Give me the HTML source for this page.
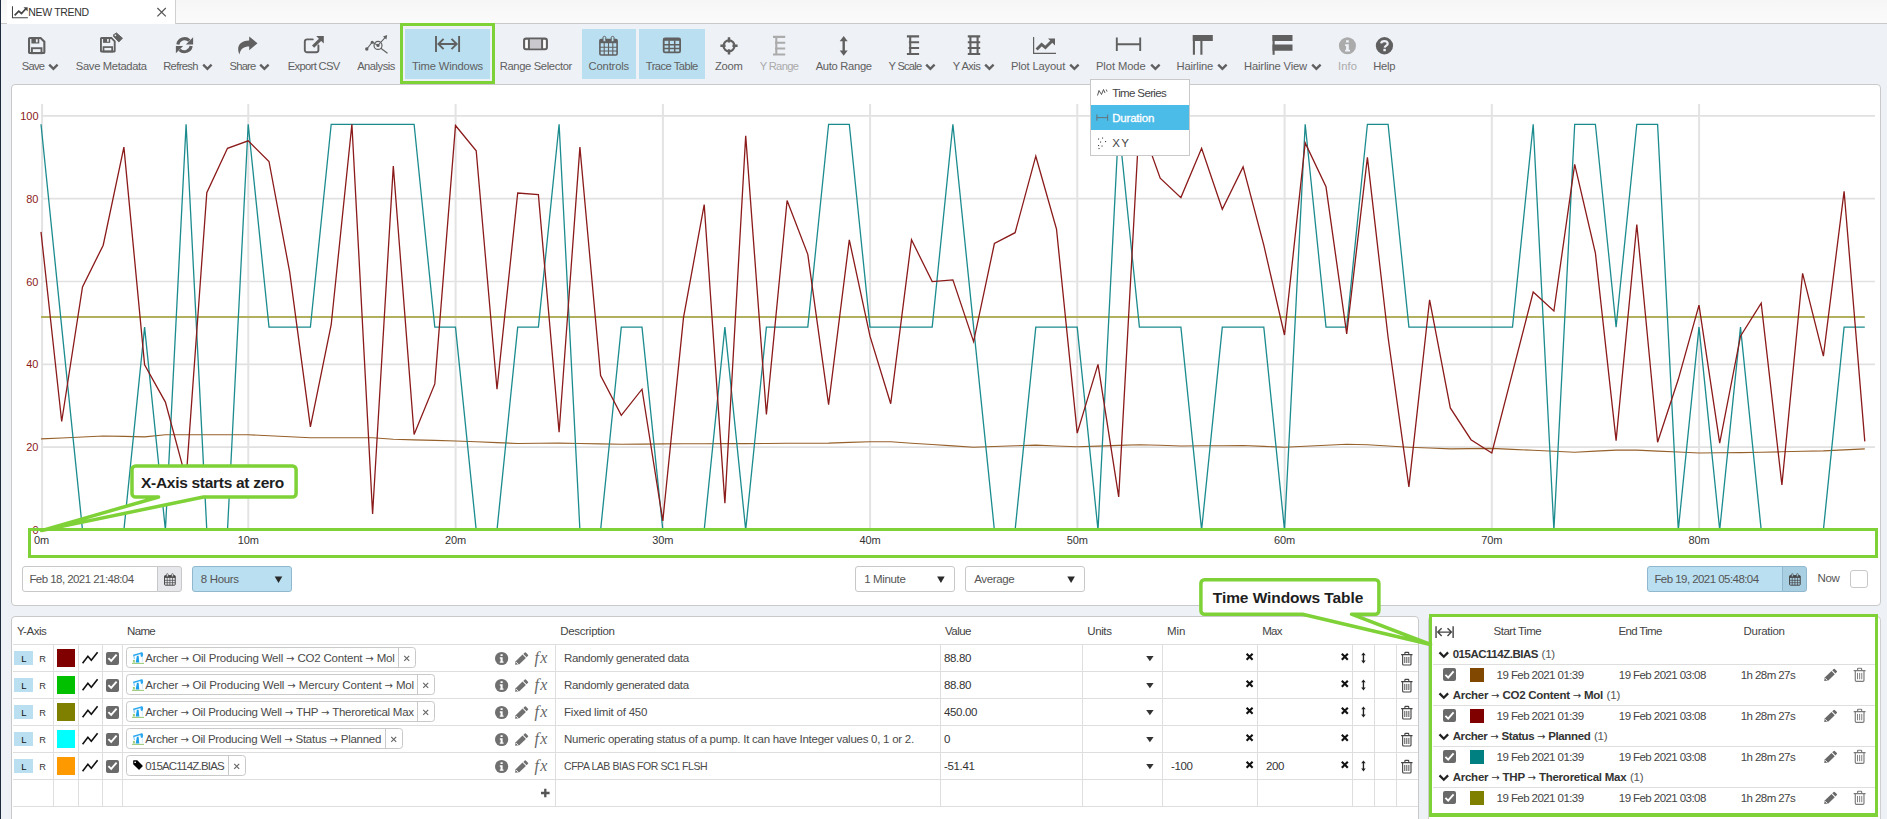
<!DOCTYPE html><html><head><meta charset="utf-8"><title>New Trend</title><style>
html,body{margin:0;padding:0;}
body{width:1887px;height:819px;overflow:hidden;position:relative;background:#eef1f6;font-family:"Liberation Sans",sans-serif;font-size:11.5px;letter-spacing:-.35px;}
div{position:absolute;}
.t{white-space:nowrap;line-height:16px;height:16px;}
.c{text-align:center;}
.r{text-align:right;}
.chev{margin-left:4px;vertical-align:-0.5px;}
svg.ov{position:absolute;left:0;top:0;pointer-events:none;}
.top{z-index:5;}
.ar{font-family:"DejaVu Sans",sans-serif;font-size:10px;letter-spacing:0;font-weight:normal;position:relative;top:-0.5px;}
</style></head><body><div class="" style="left:0px;top:0px;width:1887px;height:23px;background:linear-gradient(#f6f6f6,#fbfbfb);border-bottom:1px solid #c9c9c9;"></div>
<div class="" style="left:7px;top:0px;width:168px;height:24px;background:#fff;border-right:1px solid #d0d0d0;"></div>
<div class="" style="left:0px;top:0px;width:1.2px;height:819px;background:#1e2a3e;"></div>
<div class="t" style="left:28.2px;top:4.199999999999999px;font-size:10.5px;color:#333;letter-spacing:-0.320px;">NEW TREND</div>
<div class="" style="left:1.4px;top:24px;width:1887px;height:61px;background:#eef1f6;"></div>
<div class="" style="left:400px;top:23.2px;width:95px;height:60.8px;border:3.1px solid #7ed136;box-sizing:border-box;"></div>
<div class="" style="left:404.9px;top:29px;width:85.3px;height:50px;background:#b9dff0;"></div>
<div class="" style="left:582px;top:28.8px;width:53.7px;height:50.4px;background:#b9dff0;"></div>
<div class="" style="left:639px;top:28.8px;width:66px;height:50.4px;background:#b9dff0;"></div>
<div class="t c" style="left:-109.5px;top:58px;width:300px;color:#606060;font-size:11.2px;letter-spacing:-0.800px;">Save<svg class="chev" width="11" height="8" viewBox="0 0 11 8"><path d="M1.2 1.6L5.4 5.8L9.6 1.6" fill="none" stroke="#606060" stroke-width="2.4"/></svg></div>
<div class="t c" style="left:-38.7px;top:58px;width:300px;color:#606060;font-size:11.2px;letter-spacing:-0.336px;">Save Metadata</div>
<div class="t c" style="left:38px;top:58px;width:300px;color:#606060;font-size:11.2px;letter-spacing:-0.643px;">Refresh<svg class="chev" width="11" height="8" viewBox="0 0 11 8"><path d="M1.2 1.6L5.4 5.8L9.6 1.6" fill="none" stroke="#606060" stroke-width="2.4"/></svg></div>
<div class="t c" style="left:100px;top:58px;width:300px;color:#606060;font-size:11.2px;letter-spacing:-0.800px;">Share<svg class="chev" width="11" height="8" viewBox="0 0 11 8"><path d="M1.2 1.6L5.4 5.8L9.6 1.6" fill="none" stroke="#606060" stroke-width="2.4"/></svg></div>
<div class="t c" style="left:163.7px;top:58px;width:300px;color:#606060;font-size:11.2px;letter-spacing:-0.650px;">Export CSV</div>
<div class="t c" style="left:226px;top:58px;width:300px;color:#606060;font-size:11.2px;letter-spacing:-0.494px;">Analysis</div>
<div class="t c" style="left:297.5px;top:58px;width:300px;color:#606060;font-size:11.2px;letter-spacing:-0.155px;">Time Windows</div>
<div class="t c" style="left:385.79999999999995px;top:58px;width:300px;color:#606060;font-size:11.2px;letter-spacing:-0.353px;">Range Selector</div>
<div class="t c" style="left:458.79999999999995px;top:58px;width:300px;color:#606060;font-size:11.2px;letter-spacing:-0.163px;">Controls</div>
<div class="t c" style="left:521.8px;top:58px;width:300px;color:#606060;font-size:11.2px;letter-spacing:-0.530px;">Trace Table</div>
<div class="t c" style="left:578.8px;top:58px;width:300px;color:#606060;font-size:11.2px;letter-spacing:-0.259px;">Zoom</div>
<div class="t c" style="left:629px;top:58px;width:300px;color:#ababab;font-size:11.2px;letter-spacing:-0.655px;">Y Range</div>
<div class="t c" style="left:693.7px;top:58px;width:300px;color:#606060;font-size:11.2px;letter-spacing:-0.298px;">Auto Range</div>
<div class="t c" style="left:762.5px;top:58px;width:300px;color:#606060;font-size:11.2px;letter-spacing:-0.800px;">Y Scale<svg class="chev" width="11" height="8" viewBox="0 0 11 8"><path d="M1.2 1.6L5.4 5.8L9.6 1.6" fill="none" stroke="#606060" stroke-width="2.4"/></svg></div>
<div class="t c" style="left:824px;top:58px;width:300px;color:#606060;font-size:11.2px;letter-spacing:-0.578px;">Y Axis<svg class="chev" width="11" height="8" viewBox="0 0 11 8"><path d="M1.2 1.6L5.4 5.8L9.6 1.6" fill="none" stroke="#606060" stroke-width="2.4"/></svg></div>
<div class="t c" style="left:895.5px;top:58px;width:300px;color:#606060;font-size:11.2px;letter-spacing:-0.157px;">Plot Layout<svg class="chev" width="11" height="8" viewBox="0 0 11 8"><path d="M1.2 1.6L5.4 5.8L9.6 1.6" fill="none" stroke="#606060" stroke-width="2.4"/></svg></div>
<div class="t c" style="left:978.3px;top:58px;width:300px;color:#606060;font-size:11.2px;letter-spacing:-0.070px;">Plot Mode<svg class="chev" width="11" height="8" viewBox="0 0 11 8"><path d="M1.2 1.6L5.4 5.8L9.6 1.6" fill="none" stroke="#606060" stroke-width="2.4"/></svg></div>
<div class="t c" style="left:1052.3px;top:58px;width:300px;color:#606060;font-size:11.2px;letter-spacing:-0.187px;">Hairline<svg class="chev" width="11" height="8" viewBox="0 0 11 8"><path d="M1.2 1.6L5.4 5.8L9.6 1.6" fill="none" stroke="#606060" stroke-width="2.4"/></svg></div>
<div class="t c" style="left:1133px;top:58px;width:300px;color:#606060;font-size:11.2px;letter-spacing:-0.172px;">Hairline View<svg class="chev" width="11" height="8" viewBox="0 0 11 8"><path d="M1.2 1.6L5.4 5.8L9.6 1.6" fill="none" stroke="#606060" stroke-width="2.4"/></svg></div>
<div class="t c" style="left:1197.5px;top:58px;width:300px;color:#ababab;font-size:11.2px;letter-spacing:0.115px;">Info</div>
<div class="t c" style="left:1234.3px;top:58px;width:300px;color:#606060;font-size:11.2px;letter-spacing:-0.233px;">Help</div>
<div class="" style="left:11px;top:84px;width:1870px;height:522px;background:#fff;border:1px solid #c9c9c9;border-radius:4px;box-sizing:border-box;"></div>
<div class="t r" style="left:-261.5px;top:522.0px;width:300px;color:#8b1a1a;font-size:11px;letter-spacing:0;">0</div>
<div class="t r" style="left:-261.5px;top:439.2px;width:300px;color:#8b1a1a;font-size:11px;letter-spacing:0;">20</div>
<div class="t r" style="left:-261.5px;top:356.4px;width:300px;color:#8b1a1a;font-size:11px;letter-spacing:0;">40</div>
<div class="t r" style="left:-261.5px;top:273.6px;width:300px;color:#8b1a1a;font-size:11px;letter-spacing:0;">60</div>
<div class="t r" style="left:-261.5px;top:190.8px;width:300px;color:#8b1a1a;font-size:11px;letter-spacing:0;">80</div>
<div class="t r" style="left:-261.5px;top:108.00000000000006px;width:300px;color:#8b1a1a;font-size:11px;letter-spacing:0;">100</div>
<div class="t" style="left:34px;top:532px;font-size:11px;color:#333;letter-spacing:-.2px">0m</div>
<div class="t c" style="left:98.25px;top:532px;width:300px;font-size:11px;color:#333;letter-spacing:-.2px">10m</div>
<div class="t c" style="left:305.5px;top:532px;width:300px;font-size:11px;color:#333;letter-spacing:-.2px">20m</div>
<div class="t c" style="left:512.75px;top:532px;width:300px;font-size:11px;color:#333;letter-spacing:-.2px">30m</div>
<div class="t c" style="left:720.0px;top:532px;width:300px;font-size:11px;color:#333;letter-spacing:-.2px">40m</div>
<div class="t c" style="left:927.25px;top:532px;width:300px;font-size:11px;color:#333;letter-spacing:-.2px">50m</div>
<div class="t c" style="left:1134.5px;top:532px;width:300px;font-size:11px;color:#333;letter-spacing:-.2px">60m</div>
<div class="t c" style="left:1341.75px;top:532px;width:300px;font-size:11px;color:#333;letter-spacing:-.2px">70m</div>
<div class="t c" style="left:1549.0px;top:532px;width:300px;font-size:11px;color:#333;letter-spacing:-.2px">80m</div>
<div class="" style="left:22px;top:566px;width:136px;height:26px;background:#fff;border:1px solid #c8c8c8;border-radius:3px 0 0 3px;box-sizing:border-box;"></div>
<div class="t" style="left:29.4px;top:571.3px;color:#555;letter-spacing:-0.551px;">Feb 18, 2021 21:48:04</div>
<div class="" style="left:157px;top:566px;width:25px;height:26px;background:#e6e8ec;border:1px solid #c8c8c8;border-radius:0 3px 3px 0;box-sizing:border-box;"></div>
<div class="" style="left:192px;top:566px;width:100px;height:26px;background:#b9dff0;border:1px solid #8fb8cf;border-radius:3px;box-sizing:border-box;"></div>
<div class="t" style="left:200.8px;top:571.3px;color:#555;">8 Hours</div>
<div class="" style="left:855px;top:566px;width:100px;height:26px;background:#fff;border:1px solid #c8c8c8;border-radius:3px;box-sizing:border-box;"></div>
<div class="t" style="left:864.2px;top:571.3px;color:#555;">1 Minute</div>
<div class="" style="left:965px;top:566px;width:120px;height:26px;background:#fff;border:1px solid #c8c8c8;border-radius:3px;box-sizing:border-box;"></div>
<div class="t" style="left:974.2px;top:571.3px;color:#555;">Average</div>
<div class="" style="left:1647px;top:566px;width:136px;height:26px;background:#b9dff0;border:1px solid #8fb8cf;border-radius:3px 0 0 3px;box-sizing:border-box;"></div>
<div class="t" style="left:1654.4px;top:571.3px;color:#555;letter-spacing:-0.551px;">Feb 19, 2021 05:48:04</div>
<div class="" style="left:1782px;top:566px;width:25px;height:26px;background:#a9cfe3;border:1px solid #8fb8cf;border-radius:0 3px 3px 0;box-sizing:border-box;"></div>
<div class="t" style="left:1817.5px;top:570px;color:#555;">Now</div>
<div class="" style="left:1850px;top:570px;width:18px;height:18px;background:#fff;border:1px solid #c8c8c8;border-radius:3px;box-sizing:border-box;"></div>
<div class="" style="left:11px;top:616px;width:1408px;height:210px;background:#fff;border:1px solid #c9c9c9;border-radius:4px;box-sizing:border-box;"></div>
<div class="t" style="left:17px;top:623px;color:#444;letter-spacing:-0.494px;">Y-Axis</div>
<div class="t" style="left:127px;top:623px;color:#444;letter-spacing:-0.657px;">Name</div>
<div class="t" style="left:560.2px;top:623px;color:#444;letter-spacing:-0.272px;">Description</div>
<div class="t" style="left:945px;top:623px;color:#444;letter-spacing:-0.537px;">Value</div>
<div class="t" style="left:1087.3px;top:623px;color:#444;letter-spacing:-0.401px;">Units</div>
<div class="t" style="left:1167px;top:623px;color:#444;letter-spacing:-0.066px;">Min</div>
<div class="t" style="left:1262.2px;top:623px;color:#444;letter-spacing:-0.659px;">Max</div>
<div class="" style="left:13px;top:644px;width:1405px;height:1px;background:#dedede;"></div>
<div class="" style="left:13px;top:671px;width:1405px;height:1px;background:#dedede;"></div>
<div class="" style="left:13px;top:698px;width:1405px;height:1px;background:#dedede;"></div>
<div class="" style="left:13px;top:725px;width:1405px;height:1px;background:#dedede;"></div>
<div class="" style="left:13px;top:752px;width:1405px;height:1px;background:#dedede;"></div>
<div class="" style="left:13px;top:779px;width:1405px;height:1px;background:#dedede;"></div>
<div class="" style="left:13px;top:806px;width:1405px;height:1px;background:#dedede;"></div>
<div class="" style="left:53px;top:644px;width:1px;height:162px;background:#dedede;"></div>
<div class="" style="left:78px;top:644px;width:1px;height:162px;background:#dedede;"></div>
<div class="" style="left:102px;top:644px;width:1px;height:162px;background:#dedede;"></div>
<div class="" style="left:122px;top:644px;width:1px;height:162px;background:#dedede;"></div>
<div class="" style="left:555px;top:644px;width:1px;height:162px;background:#dedede;"></div>
<div class="" style="left:940px;top:644px;width:1px;height:162px;background:#dedede;"></div>
<div class="" style="left:1082px;top:644px;width:1px;height:162px;background:#dedede;"></div>
<div class="" style="left:1162px;top:644px;width:1px;height:162px;background:#dedede;"></div>
<div class="" style="left:1257px;top:644px;width:1px;height:162px;background:#dedede;"></div>
<div class="" style="left:1352px;top:644px;width:1px;height:162px;background:#dedede;"></div>
<div class="" style="left:1374px;top:644px;width:1px;height:162px;background:#dedede;"></div>
<div class="" style="left:1396px;top:644px;width:1px;height:162px;background:#dedede;"></div>
<div class="" style="left:14px;top:651px;width:19px;height:14px;background:#b9dff0;"></div>
<div class="t" style="left:21.2px;top:651px;color:#111;font-size:9.5px;letter-spacing:0;">L</div>
<div class="t" style="left:39.2px;top:651px;color:#333;font-size:9.2px;letter-spacing:0;">R</div>
<div class="" style="left:57px;top:649px;width:18px;height:18px;background:#800000;"></div>
<div class="" style="left:106px;top:651.5px;width:13px;height:13px;background:#6a6a6a;border-radius:2px;"></div>
<div class="" style="left:126px;top:647px;width:290px;height:20.6px;background:#fff;border:1px solid #c9c9c9;border-radius:3.5px;box-sizing:border-box;"></div>
<div class="" style="left:398px;top:647.5px;width:1px;height:19.6px;background:#c9c9c9;"></div>
<div class="t" style="left:145.2px;top:650px;color:#4a4a4a;letter-spacing:-0.200px;">Archer <span class="ar">→</span> Oil Producing Well <span class="ar">→</span> CO2 Content <span class="ar">→</span> Mol</div>
<div class="t" style="left:534.6px;top:650.2px;font-family:'Liberation Serif',serif;font-style:italic;font-size:16px;color:#666;letter-spacing:1.2px">fx</div>
<div class="t" style="left:564px;top:650px;color:#4a4a4a;letter-spacing:-0.330px;">Randomly generated data</div>
<div class="t" style="left:944px;top:650px;color:#333;">88.80</div>
<div class="" style="left:14px;top:678px;width:19px;height:14px;background:#b9dff0;"></div>
<div class="t" style="left:21.2px;top:678px;color:#111;font-size:9.5px;letter-spacing:0;">L</div>
<div class="t" style="left:39.2px;top:678px;color:#333;font-size:9.2px;letter-spacing:0;">R</div>
<div class="" style="left:57px;top:676px;width:18px;height:18px;background:#00c000;"></div>
<div class="" style="left:106px;top:678.5px;width:13px;height:13px;background:#6a6a6a;border-radius:2px;"></div>
<div class="" style="left:126px;top:674px;width:309px;height:20.6px;background:#fff;border:1px solid #c9c9c9;border-radius:3.5px;box-sizing:border-box;"></div>
<div class="" style="left:417px;top:674.5px;width:1px;height:19.6px;background:#c9c9c9;"></div>
<div class="t" style="left:145.2px;top:677px;color:#4a4a4a;letter-spacing:-0.153px;">Archer <span class="ar">→</span> Oil Producing Well <span class="ar">→</span> Mercury Content <span class="ar">→</span> Mol</div>
<div class="t" style="left:534.6px;top:677.2px;font-family:'Liberation Serif',serif;font-style:italic;font-size:16px;color:#666;letter-spacing:1.2px">fx</div>
<div class="t" style="left:564px;top:677px;color:#4a4a4a;letter-spacing:-0.330px;">Randomly generated data</div>
<div class="t" style="left:944px;top:677px;color:#333;">88.80</div>
<div class="" style="left:14px;top:705px;width:19px;height:14px;background:#b9dff0;"></div>
<div class="t" style="left:21.2px;top:705px;color:#111;font-size:9.5px;letter-spacing:0;">L</div>
<div class="t" style="left:39.2px;top:705px;color:#333;font-size:9.2px;letter-spacing:0;">R</div>
<div class="" style="left:57px;top:703px;width:18px;height:18px;background:#808000;"></div>
<div class="" style="left:106px;top:705.5px;width:13px;height:13px;background:#6a6a6a;border-radius:2px;"></div>
<div class="" style="left:126px;top:701px;width:309px;height:20.6px;background:#fff;border:1px solid #c9c9c9;border-radius:3.5px;box-sizing:border-box;"></div>
<div class="" style="left:417px;top:701.5px;width:1px;height:19.6px;background:#c9c9c9;"></div>
<div class="t" style="left:145.2px;top:704px;color:#4a4a4a;letter-spacing:-0.244px;">Archer <span class="ar">→</span> Oil Producing Well <span class="ar">→</span> THP <span class="ar">→</span> Theroretical Max</div>
<div class="t" style="left:534.6px;top:704.2px;font-family:'Liberation Serif',serif;font-style:italic;font-size:16px;color:#666;letter-spacing:1.2px">fx</div>
<div class="t" style="left:564px;top:704px;color:#4a4a4a;letter-spacing:-0.205px;">Fixed limit of 450</div>
<div class="t" style="left:944px;top:704px;color:#333;">450.00</div>
<div class="" style="left:14px;top:732px;width:19px;height:14px;background:#b9dff0;"></div>
<div class="t" style="left:21.2px;top:732px;color:#111;font-size:9.5px;letter-spacing:0;">L</div>
<div class="t" style="left:39.2px;top:732px;color:#333;font-size:9.2px;letter-spacing:0;">R</div>
<div class="" style="left:57px;top:730px;width:18px;height:18px;background:#00ffff;"></div>
<div class="" style="left:106px;top:732.5px;width:13px;height:13px;background:#6a6a6a;border-radius:2px;"></div>
<div class="" style="left:126px;top:728px;width:277px;height:20.6px;background:#fff;border:1px solid #c9c9c9;border-radius:3.5px;box-sizing:border-box;"></div>
<div class="" style="left:385px;top:728.5px;width:1px;height:19.6px;background:#c9c9c9;"></div>
<div class="t" style="left:145.2px;top:731px;color:#4a4a4a;letter-spacing:-0.268px;">Archer <span class="ar">→</span> Oil Producing Well <span class="ar">→</span> Status <span class="ar">→</span> Planned</div>
<div class="t" style="left:534.6px;top:731.2px;font-family:'Liberation Serif',serif;font-style:italic;font-size:16px;color:#666;letter-spacing:1.2px">fx</div>
<div class="t" style="left:564px;top:731px;color:#4a4a4a;letter-spacing:-0.260px;">Numeric operating status of a pump. It can have Integer values 0, 1 or 2.</div>
<div class="t" style="left:944px;top:731px;color:#333;">0</div>
<div class="" style="left:14px;top:759px;width:19px;height:14px;background:#b9dff0;"></div>
<div class="t" style="left:21.2px;top:759px;color:#111;font-size:9.5px;letter-spacing:0;">L</div>
<div class="t" style="left:39.2px;top:759px;color:#333;font-size:9.2px;letter-spacing:0;">R</div>
<div class="" style="left:57px;top:757px;width:18px;height:18px;background:#ff9900;"></div>
<div class="" style="left:106px;top:759.5px;width:13px;height:13px;background:#6a6a6a;border-radius:2px;"></div>
<div class="" style="left:126px;top:755px;width:120px;height:20.6px;background:#fff;border:1px solid #c9c9c9;border-radius:3.5px;box-sizing:border-box;"></div>
<div class="" style="left:228px;top:755.5px;width:1px;height:19.6px;background:#c9c9c9;"></div>
<div class="t" style="left:145.2px;top:758px;color:#4a4a4a;letter-spacing:-0.799px;">015AC114Z.BIAS</div>
<div class="t" style="left:534.6px;top:758.2px;font-family:'Liberation Serif',serif;font-style:italic;font-size:16px;color:#666;letter-spacing:1.2px">fx</div>
<div class="t" style="left:564px;top:758px;color:#4a4a4a;font-size:10.5px;letter-spacing:-0.436px;">CFPA LAB BIAS FOR SC1 FLSH</div>
<div class="t" style="left:944px;top:758px;color:#333;">-51.41</div>
<div class="t" style="left:1171px;top:758px;color:#333;">-100</div>
<div class="t" style="left:1266px;top:758px;color:#333;">200</div>
<div class="" style="left:1428px;top:616px;width:452.5px;height:210px;background:#fff;border:1px solid #cfcfcf;border-radius:4px;box-sizing:border-box;"></div>
<div class="" style="left:1429.2px;top:613.9px;width:449px;height:203.2px;background:#7ed136;"></div>
<div class="" style="left:1432.4px;top:617.1px;width:442.7px;height:196.3px;background:#fff;"></div>
<div class="t" style="left:1493.5px;top:623px;color:#444;letter-spacing:-0.466px;">Start Time</div>
<div class="t" style="left:1618.5px;top:623px;color:#444;letter-spacing:-0.668px;">End Time</div>
<div class="t" style="left:1743.5px;top:623px;color:#444;letter-spacing:-0.279px;">Duration</div>
<div class="t" style="left:1452.7px;top:646px;color:#333;letter-spacing:-0.487px;"><b>015AC114Z.BIAS</b><span style="font-weight:normal;color:#555;letter-spacing:-.2px;margin-left:3.6px">(1)</span></div>
<div class="" style="left:1433px;top:663.7px;width:442px;height:1px;background:#dedede;"></div>
<div class="" style="left:1443px;top:668.2px;width:13px;height:13px;background:#6a6a6a;border-radius:2px;"></div>
<div class="" style="left:1470px;top:668.2px;width:14.2px;height:13.9px;background:#804800;"></div>
<div class="t" style="left:1496.6px;top:667px;color:#444;letter-spacing:-0.567px;">19 Feb 2021 01:39</div>
<div class="t" style="left:1618.8px;top:667px;color:#444;letter-spacing:-0.567px;">19 Feb 2021 03:08</div>
<div class="t" style="left:1740.8px;top:667px;color:#444;letter-spacing:-0.583px;">1h 28m 27s</div>
<div class="t" style="left:1452.7px;top:687px;color:#333;letter-spacing:-0.267px;"><b>Archer <span class="ar">→</span> CO2 Content <span class="ar">→</span> Mol</b><span style="font-weight:normal;color:#555;letter-spacing:-.2px;margin-left:3.6px">(1)</span></div>
<div class="" style="left:1433px;top:704.7px;width:442px;height:1px;background:#dedede;"></div>
<div class="" style="left:1443px;top:709.2px;width:13px;height:13px;background:#6a6a6a;border-radius:2px;"></div>
<div class="" style="left:1470px;top:709.2px;width:14.2px;height:13.9px;background:#800000;"></div>
<div class="t" style="left:1496.6px;top:708px;color:#444;letter-spacing:-0.567px;">19 Feb 2021 01:39</div>
<div class="t" style="left:1618.8px;top:708px;color:#444;letter-spacing:-0.567px;">19 Feb 2021 03:08</div>
<div class="t" style="left:1740.8px;top:708px;color:#444;letter-spacing:-0.583px;">1h 28m 27s</div>
<div class="t" style="left:1452.7px;top:728px;color:#333;letter-spacing:-0.388px;"><b>Archer <span class="ar">→</span> Status <span class="ar">→</span> Planned</b><span style="font-weight:normal;color:#555;letter-spacing:-.2px;margin-left:3.6px">(1)</span></div>
<div class="" style="left:1433px;top:745.7px;width:442px;height:1px;background:#dedede;"></div>
<div class="" style="left:1443px;top:750.2px;width:13px;height:13px;background:#6a6a6a;border-radius:2px;"></div>
<div class="" style="left:1470px;top:750.2px;width:14.2px;height:13.9px;background:#008080;"></div>
<div class="t" style="left:1496.6px;top:749px;color:#444;letter-spacing:-0.567px;">19 Feb 2021 01:39</div>
<div class="t" style="left:1618.8px;top:749px;color:#444;letter-spacing:-0.567px;">19 Feb 2021 03:08</div>
<div class="t" style="left:1740.8px;top:749px;color:#444;letter-spacing:-0.583px;">1h 28m 27s</div>
<div class="t" style="left:1452.7px;top:769px;color:#333;letter-spacing:-0.247px;"><b>Archer <span class="ar">→</span> THP <span class="ar">→</span> Theroretical Max</b><span style="font-weight:normal;color:#555;letter-spacing:-.2px;margin-left:3.6px">(1)</span></div>
<div class="" style="left:1433px;top:786.7px;width:442px;height:1px;background:#dedede;"></div>
<div class="" style="left:1443px;top:791.2px;width:13px;height:13px;background:#6a6a6a;border-radius:2px;"></div>
<div class="" style="left:1470px;top:791.2px;width:14.2px;height:13.9px;background:#808000;"></div>
<div class="t" style="left:1496.6px;top:790px;color:#444;letter-spacing:-0.567px;">19 Feb 2021 01:39</div>
<div class="t" style="left:1618.8px;top:790px;color:#444;letter-spacing:-0.567px;">19 Feb 2021 03:08</div>
<div class="t" style="left:1740.8px;top:790px;color:#444;letter-spacing:-0.583px;">1h 28m 27s</div>
<svg class="ov" width="1887" height="819" viewBox="0 0 1887 819"><g transform="translate(11.9,6.2) scale(1.14)"><path d="M0.5 0V10.1H14" fill="none" stroke="#444" stroke-width="0.9"/><path d="M2.4 8L6 4.3L8.4 6.4L12.2 2.2" fill="none" stroke="#444" stroke-width="1.5"/><path d="M10.2 1H13.8V4.6Z" fill="#444"/></g>
<g transform="translate(156.6,7.2) scale(1)"><path d="M0.8 0.8L9.2 9.2M9.2 0.8L0.8 9.2" stroke="#555" stroke-width="1.2"/></g>
<g transform="translate(28,37) scale(1)"><path d="M1.9 1.05H12.6L16.35 4.8V15.2a.85.85 0 0 1-.85.85H1.9a.85.85 0 0 1-.85-.85V1.9a.85.85 0 0 1 .85-.85Z" fill="none" stroke="#606060" stroke-width="2.1"/><rect x="3.4" y="1" width="7.9" height="5.5" fill="#606060"/><rect x="7.9" y="2.2" width="1.8" height="3.1" fill="#eef1f6"/><rect x="3.9" y="11.2" width="9.6" height="5" fill="none" stroke="#606060" stroke-width="1.9"/></g>
<g transform="translate(100,33) scale(1)"><g transform="translate(0,4) scale(0.9)"><path d="M1.9 1.05H12.6L16.35 4.8V15.2a.85.85 0 0 1-.85.85H1.9a.85.85 0 0 1-.85-.85V1.9a.85.85 0 0 1 .85-.85Z" fill="none" stroke="#606060" stroke-width="2.1"/><rect x="3.4" y="1" width="7.9" height="5.5" fill="#606060"/><rect x="7.9" y="2.2" width="1.8" height="3.1" fill="#eef1f6"/><rect x="3.9" y="11.2" width="9.6" height="5" fill="none" stroke="#606060" stroke-width="1.9"/></g><path d="M13.5 1.8L16.5 -0.1L22.5 5.3L18.8 8.9L13.7 3.6Z" fill="#606060" stroke="#606060" stroke-width="0.9" stroke-linejoin="round"/><circle cx="15.4" cy="2.3" r="0.85" fill="#eef1f6"/></g>
<g transform="translate(175.8,37) scale(1)"><path d="M2 7.4A6.9 6.9 0 0 1 13.6 3.6" fill="none" stroke="#606060" stroke-width="3.1"/><path d="M17.3 0.2V7.4H10.1Z" fill="#606060"/><path d="M15.4 9A6.9 6.9 0 0 1 3.8 12.8" fill="none" stroke="#606060" stroke-width="3.1"/><path d="M0.1 16.2V9H7.3Z" fill="#606060"/></g>
<g transform="translate(237,37) scale(1)"><path d="M12.2 -0.6L20.5 6.3L12.2 13.2V9.4C7 9.4 3.6 11.3 2.4 17.4C-0.4 11.3 1 4 12.2 3.6Z" fill="#606060"/></g>
<g transform="translate(303.8,36) scale(1)"><path d="M14.6 9.5V14a2.2 2.2 0 0 1-2.2 2.2H3.2A2.2 2.2 0 0 1 1 14V5.6A2.2 2.2 0 0 1 3.2 3.4H9" fill="none" stroke="#606060" stroke-width="1.9" stroke-linecap="round"/><path d="M12.4 0H20V7.6L17.3 4.9L10.4 11.8L8.2 9.6L15.1 2.7Z" fill="#606060"/></g>
<g transform="translate(365,35) scale(1)"><circle cx="1.8" cy="14" r="1.7" fill="#606060"/><circle cx="7.2" cy="7.2" r="1.5" fill="#606060"/><path d="M1.8 14L7.2 7.2L13 10.4L20.5 2.2" fill="none" stroke="#606060" stroke-width="1.1"/><path d="M22.2 0L21.4 4.6L18 1.4Z" fill="#606060"/><circle cx="13" cy="10.4" r="4" fill="none" stroke="#606060" stroke-width="1.2"/><circle cx="13" cy="10.4" r="1.6" fill="#606060"/><path d="M15.8 13.2L22.5 18.2" stroke="#606060" stroke-width="1.1"/></g>
<g transform="translate(435,36) scale(1)"><path d="M1 0V16M24.1 0V16M3.4 8H21.7M8.6 2.9L3.4 8L8.6 13.1M16.5 2.9L21.7 8L16.5 13.1" fill="none" stroke="#606060" stroke-width="1.9"/></g>
<g transform="translate(523,37.5) scale(1)"><rect x="1.1" y="1.1" width="22.8" height="10.6" rx="1.9" fill="#fff" stroke="#606060" stroke-width="2.1"/><rect x="6" y="2" width="13" height="8.8" fill="#c9c9cd"/><path d="M5.9 1V11.8M19.1 1V11.8" stroke="#606060" stroke-width="2"/></g>
<g transform="translate(599,36) scale(1)"><rect x="0.9" y="3.6" width="17.2" height="15.4" rx="1.2" fill="none" stroke="#606060" stroke-width="1.6"/><rect x="0.9" y="3.6" width="17.2" height="3.6" fill="#606060"/><path d="M1 11.2H18M1 15H18M5.2 7V19M9.5 7V19M13.8 7V19" stroke="#606060" stroke-width="1.1"/><rect x="4" y="0.4" width="2.8" height="5.2" rx="1.2" fill="#b9dff0" stroke="#606060" stroke-width="1"/><rect x="12.2" y="0.4" width="2.8" height="5.2" rx="1.2" fill="#b9dff0" stroke="#606060" stroke-width="1"/></g>
<g transform="translate(662.8,37.5) scale(1)"><rect x="0.9" y="0.9" width="16.4" height="14" rx="1.4" fill="none" stroke="#606060" stroke-width="1.8"/><rect x="0.9" y="0.9" width="16.4" height="2.4" fill="#606060"/><path d="M1 7.2H17.2M1 11.1H17.2M6.3 3V14.8M11.9 3V14.8" stroke="#606060" stroke-width="1.5"/></g>
<g transform="translate(720,37) scale(1)"><circle cx="9" cy="8.8" r="5.5" fill="none" stroke="#606060" stroke-width="2.2"/><path d="M9 0.2V5.4M9 12.2V17.4M0.4 8.8H5.6M12.4 8.8H17.6" stroke="#606060" stroke-width="2.5"/></g>
<g transform="translate(773,36) scale(1)"><path d="M0 0.9H12.2M2 6.7H12.2M2 12.5H12.2M0 18.5H12.2" stroke="#ababab" stroke-width="2.1"/><path d="M3.3 0.8V18.4" stroke="#ababab" stroke-width="2.1"/></g>
<g transform="translate(839.7,36) scale(1)"><path d="M4 0L8 5.2H5.2V14.6H8L4 19.8L0 14.6H2.8V5.2H0Z" fill="#606060"/></g>
<g transform="translate(906.9,35.5) scale(1)"><path d="M0 0.9H12.2M2 6.7H12.2M2 12.5H12.2M0 18.5H12.2" stroke="#606060" stroke-width="2.1"/><path d="M3.3 0.8V18.4" stroke="#606060" stroke-width="2.1"/></g>
<g transform="translate(967.8,35.5) scale(1)"><path d="M0 0.9H12.4M0 6.7H12.4M0 12.5H12.4M0 18.5H12.4" stroke="#606060" stroke-width="2.1"/><path d="M2.6 0.8V18.4M9.8 0.8V18.4" stroke="#606060" stroke-width="2.1"/></g>
<g transform="translate(1033,37) scale(1)"><path d="M0.6 0V16.4H23" fill="none" stroke="#606060" stroke-width="1.2"/><path d="M3.6 12.6L8.6 7.4L12.4 10.6L19 4" fill="none" stroke="#606060" stroke-width="2.9"/><path d="M15 1.6H22V8.6Z" fill="#606060"/></g>
<g transform="translate(1116,37.5) scale(1)"><path d="M0.8 0V13.6M24.2 0V13.6M0.8 6.8H24.2" fill="none" stroke="#606060" stroke-width="1.9"/></g>
<g transform="translate(1192.8,35) scale(1)"><path d="M0 0H20V6H0Z" fill="#606060"/><path d="M1.1 0V19.8M8.6 4V19.8" stroke="#606060" stroke-width="2.1"/></g>
<g transform="translate(1272.5,35) scale(1)"><path d="M0 0H20V6H0ZM0 9.6H20V15.8H0Z" fill="#606060"/><path d="M1.1 0V19.8" stroke="#606060" stroke-width="2.1"/></g>
<g transform="translate(1338.9,37.3) scale(0.97)"><g transform="scale(1.0)"><circle cx="8.8" cy="8.8" r="8.8" fill="#ababab"/><path d="M7.4 3H10.2V5.4H7.4ZM6.4 7.2H10.2V12.8H11.4V14.6H6.4V12.8H7.4V9H6.4Z" fill="#eef1f6"/></g></g>
<g transform="translate(1375.8,37.1) scale(0.96)"><circle cx="9" cy="9" r="9" fill="#606060"/><path d="M5.6 6.6C5.8 3.4 12.4 3.2 12.4 6.8C12.4 8.8 9.4 8.8 9.2 11" fill="none" stroke="#eef1f6" stroke-width="2.3"/><rect x="7.9" y="12.2" width="2.5" height="2.5" fill="#eef1f6"/></g>
<path d="M41 529.9H1875" stroke="#e1e1e1" stroke-width="1.7"/>
<path d="M41 447.1H1875" stroke="#e1e1e1" stroke-width="1.7"/>
<path d="M41 364.3H1875" stroke="#e1e1e1" stroke-width="1.7"/>
<path d="M41 281.5H1875" stroke="#e1e1e1" stroke-width="1.7"/>
<path d="M41 198.7H1875" stroke="#e1e1e1" stroke-width="1.7"/>
<path d="M41 115.9H1875" stroke="#e1e1e1" stroke-width="1.7"/>
<path d="M42.1 104V530" stroke="#e3e3e3" stroke-width="2"/>
<path d="M248.3 104V530" stroke="#e3e3e3" stroke-width="2"/>
<path d="M455.6 104V530" stroke="#e3e3e3" stroke-width="2"/>
<path d="M662.9 104V530" stroke="#e3e3e3" stroke-width="2"/>
<path d="M870.1 104V530" stroke="#e3e3e3" stroke-width="2"/>
<path d="M1077.3 104V530" stroke="#e3e3e3" stroke-width="2"/>
<path d="M1284.6 104V530" stroke="#e3e3e3" stroke-width="2"/>
<path d="M1491.8 104V530" stroke="#e3e3e3" stroke-width="2"/>
<path d="M1699.1 104V530" stroke="#e3e3e3" stroke-width="2"/>
<polyline points="41.0,317.0 61.7,317.0 82.5,317.0 103.2,317.0 123.9,317.0 144.6,317.0 165.4,317.0 186.1,317.0 206.8,317.0 227.5,317.0 248.2,317.0 269.0,317.0 289.7,317.0 310.4,317.0 331.2,317.0 351.9,317.0 372.6,317.0 393.3,317.0 414.1,317.0 434.8,317.0 455.5,317.0 476.2,317.0 497.0,317.0 517.7,317.0 538.4,317.0 559.1,317.0 579.9,317.0 600.6,317.0 621.3,317.0 642.0,317.0 662.8,317.0 683.5,317.0 704.2,317.0 724.9,317.0 745.7,317.0 766.4,317.0 787.1,317.0 807.8,317.0 828.6,317.0 849.3,317.0 870.0,317.0 890.7,317.0 911.5,317.0 932.2,317.0 952.9,317.0 973.6,317.0 994.4,317.0 1015.1,317.0 1035.8,317.0 1056.5,317.0 1077.2,317.0 1098.0,317.0 1118.7,317.0 1139.4,317.0 1160.2,317.0 1180.9,317.0 1201.6,317.0 1222.3,317.0 1243.1,317.0 1263.8,317.0 1284.5,317.0 1305.2,317.0 1326.0,317.0 1346.7,317.0 1367.4,317.0 1388.1,317.0 1408.9,317.0 1429.6,317.0 1450.3,317.0 1471.0,317.0 1491.8,317.0 1512.5,317.0 1533.2,317.0 1553.9,317.0 1574.7,317.0 1595.4,317.0 1616.1,317.0 1636.8,317.0 1657.6,317.0 1678.3,317.0 1699.0,317.0 1719.7,317.0 1740.5,317.0 1761.2,317.0 1781.9,317.0 1802.6,317.0 1823.4,317.0 1844.1,317.0 1864.8,317.0" fill="none" stroke="#b0b05e" stroke-width="1.9"/>
<polyline points="41.0,438.9 61.7,438.0 82.5,437.0 103.2,436.0 123.9,436.4 144.6,436.9 165.4,434.8 186.1,434.8 206.8,434.8 227.5,434.8 248.2,434.8 269.0,435.7 289.7,436.7 310.4,437.7 331.2,437.7 351.9,437.7 372.6,437.7 393.3,439.3 414.1,439.9 434.8,440.4 455.5,441.0 476.2,441.8 497.0,442.6 517.7,443.5 538.4,443.3 559.1,443.1 579.9,443.5 600.6,443.9 621.3,444.3 642.0,444.1 662.8,443.9 683.5,443.8 704.2,443.7 724.9,443.6 745.7,443.6 766.4,443.5 787.1,443.3 807.8,443.2 828.6,443.1 849.3,442.4 870.0,441.8 890.7,441.8 911.5,443.2 932.2,444.5 952.9,445.9 973.6,447.2 994.4,446.5 1015.1,445.8 1035.8,445.1 1056.5,446.0 1077.2,446.8 1098.0,446.1 1118.7,445.4 1139.4,444.7 1160.2,445.3 1180.9,446.0 1201.6,445.8 1222.3,445.7 1243.1,445.5 1263.8,446.4 1284.5,447.2 1305.2,446.2 1326.0,445.3 1346.7,444.3 1367.4,444.7 1388.1,446.0 1408.9,447.2 1429.6,448.0 1450.3,448.9 1471.0,448.6 1491.8,448.4 1512.5,449.4 1533.2,450.3 1553.9,451.2 1574.7,452.2 1595.4,451.1 1616.1,450.1 1636.8,450.1 1657.6,451.1 1678.3,452.0 1699.0,453.0 1719.7,452.8 1740.5,452.6 1761.2,452.2 1781.9,451.8 1802.6,451.3 1823.4,450.9 1844.1,449.9 1864.8,448.9" fill="none" stroke="#96602a" stroke-width="1.1"/>
<polyline points="41.0,124.3 61.7,327.1 82.5,530.0 103.2,530.0 123.9,530.0 144.6,327.1 165.4,530.0 186.1,124.3 206.8,530.0 227.5,530.0 248.2,124.3 269.0,327.1 289.7,327.1 310.4,327.1 331.2,124.3 351.9,124.3 372.6,124.3 393.3,124.3 414.1,124.3 434.8,327.1 455.5,327.1 476.2,530.0 497.0,530.0 517.7,327.1 538.4,327.1 559.1,124.3 579.9,530.0 600.6,530.0 621.3,327.1 642.0,327.1 662.8,530.0 683.5,530.0 704.2,530.0 724.9,327.1 745.7,530.0 766.4,327.1 787.1,327.1 807.8,327.1 828.6,124.3 849.3,124.3 870.0,327.1 890.7,327.1 911.5,327.1 932.2,327.1 952.9,124.3 973.6,327.1 994.4,530.0 1015.1,530.0 1035.8,327.1 1056.5,327.1 1077.2,327.1 1098.0,530.0 1118.7,124.3 1139.4,327.1 1160.2,327.1 1180.9,327.1 1201.6,530.0 1222.3,327.1 1243.1,327.1 1263.8,327.1 1284.5,530.0 1305.2,124.3 1326.0,327.1 1346.7,327.1 1367.4,124.3 1388.1,124.3 1408.9,327.1 1429.6,327.1 1450.3,327.1 1471.0,327.1 1491.8,327.1 1512.5,327.1 1533.2,124.3 1553.9,530.0 1574.7,124.3 1595.4,124.3 1616.1,327.1 1636.8,124.3 1657.6,124.3 1678.3,530.0 1699.0,327.1 1719.7,530.0 1740.5,327.1 1761.2,530.0 1781.9,530.0 1802.6,530.0 1823.4,530.0 1844.1,327.1 1864.8,327.1" fill="none" stroke="#1b8b8e" stroke-width="1.3" stroke-linejoin="miter"/>
<polyline points="41.0,231.9 61.7,421.5 82.5,287.0 103.2,245.2 123.9,147.1 144.6,364.8 165.4,402.1 186.1,479.1 206.8,192.6 227.5,148.3 248.2,140.8 269.0,161.5 289.7,272.1 310.4,426.9 331.2,324.7 351.9,124.3 372.6,513.9 393.3,166.1 414.1,434.4 434.8,383.9 455.5,125.5 476.2,150.8 497.0,389.2 517.7,193.0 538.4,194.7 559.1,432.3 579.9,147.1 600.6,375.6 621.3,415.3 642.0,389.2 662.8,520.9 683.5,317.6 704.2,204.6 724.9,503.1 745.7,135.9 766.4,414.5 787.1,200.5 807.8,254.3 828.6,404.6 849.3,239.8 870.0,336.2 890.7,403.7 911.5,239.8 932.2,281.6 952.9,279.9 973.6,341.6 994.4,243.5 1015.1,232.7 1035.8,156.2 1056.5,229.0 1077.2,433.1 1098.0,364.4 1118.7,496.9 1139.4,120.1 1160.2,178.1 1180.9,197.6 1201.6,148.3 1222.3,209.2 1243.1,166.9 1263.8,245.2 1284.5,335.0 1305.2,142.9 1326.0,186.8 1346.7,333.8 1367.4,157.4 1388.1,337.5 1408.9,486.9 1429.6,299.8 1450.3,407.9 1471.0,439.7 1491.8,453.0 1512.5,372.7 1533.2,292.0 1553.9,311.0 1574.7,164.4 1595.4,253.0 1616.1,440.6 1636.8,224.5 1657.6,442.2 1678.3,379.3 1699.0,305.2 1719.7,443.1 1740.5,336.2 1761.2,303.1 1781.9,484.9 1802.6,273.3 1823.4,356.1 1844.1,191.3 1864.8,441.4" fill="none" stroke="#8b1a1a" stroke-width="1.3"/>
<g transform="translate(164,573.4) scale(0.62)"><rect x="0.9" y="3.6" width="17.2" height="15.4" rx="1.2" fill="none" stroke="#444" stroke-width="1.6"/><rect x="0.9" y="3.6" width="17.2" height="3.6" fill="#444"/><path d="M1 11.2H18M1 15H18M5.2 7V19M9.5 7V19M13.8 7V19" stroke="#444" stroke-width="1.1"/><rect x="4" y="0.4" width="2.8" height="5.2" rx="1.2" fill="#e6e8ec" stroke="#444" stroke-width="1"/><rect x="12.2" y="0.4" width="2.8" height="5.2" rx="1.2" fill="#e6e8ec" stroke="#444" stroke-width="1"/></g>
<path d="M274.7 576.4h7.6l-3.8 6.536Z" fill="#2a2a2a"/>
<path d="M937.1 576.4h7.6l-3.8 6.536Z" fill="#2a2a2a"/>
<path d="M1067.3 576.4h7.6l-3.8 6.536Z" fill="#2a2a2a"/>
<g transform="translate(1789,573.4) scale(0.62)"><rect x="0.9" y="3.6" width="17.2" height="15.4" rx="1.2" fill="none" stroke="#444" stroke-width="1.6"/><rect x="0.9" y="3.6" width="17.2" height="3.6" fill="#444"/><path d="M1 11.2H18M1 15H18M5.2 7V19M9.5 7V19M13.8 7V19" stroke="#444" stroke-width="1.1"/><rect x="4" y="0.4" width="2.8" height="5.2" rx="1.2" fill="#a9cfe3" stroke="#444" stroke-width="1"/><rect x="12.2" y="0.4" width="2.8" height="5.2" rx="1.2" fill="#a9cfe3" stroke="#444" stroke-width="1"/></g>
<g transform="translate(82,651.2) scale(1)"><path d="M0.6 12L5.9 5L9.3 9L15.6 1" fill="none" stroke="#111" stroke-width="1.6"/></g>
<g transform="translate(106,651.5) scale(1)"><path d="M2.4 6.6L5.2 9.4L10.6 3.2" fill="none" stroke="#fff" stroke-width="1.9"/></g>
<g transform="translate(403.4,655.1) scale(1)"><path d="M0.8 0.8L5.8 5.8M5.8 0.8L0.8 5.8" stroke="#666" stroke-width="1.15"/></g>
<g transform="translate(132,651) scale(1)"><path d="M0 12.4H12" stroke="#9ccc7c" stroke-width="1.1"/><rect x="0.9" y="8.9" width="2" height="2.6" fill="#9ccc7c"/><path d="M4.9 4.7H6.6L7.3 11.5H3.7Z" fill="#1ba0ec"/><path d="M1.2 4.5L9.2 2.1" stroke="#2aa8f0" stroke-width="1.5"/><ellipse cx="9.8" cy="3.5" rx="1.3" ry="2.6" fill="#2aa8f0"/><path d="M1.8 4.7L2.4 7.9" stroke="#6cc4f6" stroke-width="1"/><path d="M10.4 6V11" stroke="#c4e6fb" stroke-width="0.8"/></g>
<g transform="translate(495,651.9) scale(1)"><g transform="scale(0.7499999999999999)"><circle cx="8.8" cy="8.8" r="8.8" fill="#707070"/><path d="M7.4 3H10.2V5.4H7.4ZM6.4 7.2H10.2V12.8H11.4V14.6H6.4V12.8H7.4V9H6.4Z" fill="#fff"/></g></g>
<g transform="translate(514.9,652.2) scale(1)"><path d="M0.2 12.6L0.75 9.1L7.6 2.4L11 5.7L4.45 12.05Z" fill="#707070"/><path d="M8.4 1.7L9.9 0.3a.7.7 0 0 1 1 0L13.1 2.5a.7.7 0 0 1 0 1L11.7 5Z" fill="#707070"/><path d="M1.2 9.9L3.5 12.1" stroke="#fff" stroke-width="0.9"/></g>
<path d="M1146.2 655.9h7.4l-3.7 5.328Z" fill="#333"/>
<g transform="translate(1245.8,653) scale(1)"><path d="M0.8 0.8L6.8 6.8M6.8 0.8L0.8 6.8" stroke="#111" stroke-width="2.1"/></g>
<g transform="translate(1341,653) scale(1)"><path d="M0.8 0.8L6.8 6.8M6.8 0.8L0.8 6.8" stroke="#111" stroke-width="2.1"/></g>
<g transform="translate(1361.2,652.4) scale(0.56)"><path d="M4 0L8 5.2H5.2V14.6H8L4 19.8L0 14.6H2.8V5.2H0Z" fill="#222"/></g>
<g transform="translate(1401.2,651.8) scale(1.02)"><path d="M-0.1 2.8H11.1M3.6 2.6V1.2a.6.6 0 0 1 .6-.6H6.8a.6.6 0 0 1 .6.6V2.6" fill="none" stroke="#444" stroke-width="1.1"/><path d="M1.4 3V12a1 1 0 0 0 1 1H8.6a1 1 0 0 0 1-1V3" fill="none" stroke="#444" stroke-width="1.1"/><path d="M3.5 5V11M5.5 5V11M7.5 5V11" stroke="#444" stroke-width="0.9"/></g>
<g transform="translate(82,678.2) scale(1)"><path d="M0.6 12L5.9 5L9.3 9L15.6 1" fill="none" stroke="#111" stroke-width="1.6"/></g>
<g transform="translate(106,678.5) scale(1)"><path d="M2.4 6.6L5.2 9.4L10.6 3.2" fill="none" stroke="#fff" stroke-width="1.9"/></g>
<g transform="translate(422.4,682.1) scale(1)"><path d="M0.8 0.8L5.8 5.8M5.8 0.8L0.8 5.8" stroke="#666" stroke-width="1.15"/></g>
<g transform="translate(132,678) scale(1)"><path d="M0 12.4H12" stroke="#9ccc7c" stroke-width="1.1"/><rect x="0.9" y="8.9" width="2" height="2.6" fill="#9ccc7c"/><path d="M4.9 4.7H6.6L7.3 11.5H3.7Z" fill="#1ba0ec"/><path d="M1.2 4.5L9.2 2.1" stroke="#2aa8f0" stroke-width="1.5"/><ellipse cx="9.8" cy="3.5" rx="1.3" ry="2.6" fill="#2aa8f0"/><path d="M1.8 4.7L2.4 7.9" stroke="#6cc4f6" stroke-width="1"/><path d="M10.4 6V11" stroke="#c4e6fb" stroke-width="0.8"/></g>
<g transform="translate(495,678.9) scale(1)"><g transform="scale(0.7499999999999999)"><circle cx="8.8" cy="8.8" r="8.8" fill="#707070"/><path d="M7.4 3H10.2V5.4H7.4ZM6.4 7.2H10.2V12.8H11.4V14.6H6.4V12.8H7.4V9H6.4Z" fill="#fff"/></g></g>
<g transform="translate(514.9,679.2) scale(1)"><path d="M0.2 12.6L0.75 9.1L7.6 2.4L11 5.7L4.45 12.05Z" fill="#707070"/><path d="M8.4 1.7L9.9 0.3a.7.7 0 0 1 1 0L13.1 2.5a.7.7 0 0 1 0 1L11.7 5Z" fill="#707070"/><path d="M1.2 9.9L3.5 12.1" stroke="#fff" stroke-width="0.9"/></g>
<path d="M1146.2 682.9h7.4l-3.7 5.328Z" fill="#333"/>
<g transform="translate(1245.8,680) scale(1)"><path d="M0.8 0.8L6.8 6.8M6.8 0.8L0.8 6.8" stroke="#111" stroke-width="2.1"/></g>
<g transform="translate(1341,680) scale(1)"><path d="M0.8 0.8L6.8 6.8M6.8 0.8L0.8 6.8" stroke="#111" stroke-width="2.1"/></g>
<g transform="translate(1361.2,679.4) scale(0.56)"><path d="M4 0L8 5.2H5.2V14.6H8L4 19.8L0 14.6H2.8V5.2H0Z" fill="#222"/></g>
<g transform="translate(1401.2,678.8) scale(1.02)"><path d="M-0.1 2.8H11.1M3.6 2.6V1.2a.6.6 0 0 1 .6-.6H6.8a.6.6 0 0 1 .6.6V2.6" fill="none" stroke="#444" stroke-width="1.1"/><path d="M1.4 3V12a1 1 0 0 0 1 1H8.6a1 1 0 0 0 1-1V3" fill="none" stroke="#444" stroke-width="1.1"/><path d="M3.5 5V11M5.5 5V11M7.5 5V11" stroke="#444" stroke-width="0.9"/></g>
<g transform="translate(82,705.2) scale(1)"><path d="M0.6 12L5.9 5L9.3 9L15.6 1" fill="none" stroke="#111" stroke-width="1.6"/></g>
<g transform="translate(106,705.5) scale(1)"><path d="M2.4 6.6L5.2 9.4L10.6 3.2" fill="none" stroke="#fff" stroke-width="1.9"/></g>
<g transform="translate(422.4,709.1) scale(1)"><path d="M0.8 0.8L5.8 5.8M5.8 0.8L0.8 5.8" stroke="#666" stroke-width="1.15"/></g>
<g transform="translate(132,705) scale(1)"><path d="M0 12.4H12" stroke="#9ccc7c" stroke-width="1.1"/><rect x="0.9" y="8.9" width="2" height="2.6" fill="#9ccc7c"/><path d="M4.9 4.7H6.6L7.3 11.5H3.7Z" fill="#1ba0ec"/><path d="M1.2 4.5L9.2 2.1" stroke="#2aa8f0" stroke-width="1.5"/><ellipse cx="9.8" cy="3.5" rx="1.3" ry="2.6" fill="#2aa8f0"/><path d="M1.8 4.7L2.4 7.9" stroke="#6cc4f6" stroke-width="1"/><path d="M10.4 6V11" stroke="#c4e6fb" stroke-width="0.8"/></g>
<g transform="translate(495,705.9) scale(1)"><g transform="scale(0.7499999999999999)"><circle cx="8.8" cy="8.8" r="8.8" fill="#707070"/><path d="M7.4 3H10.2V5.4H7.4ZM6.4 7.2H10.2V12.8H11.4V14.6H6.4V12.8H7.4V9H6.4Z" fill="#fff"/></g></g>
<g transform="translate(514.9,706.2) scale(1)"><path d="M0.2 12.6L0.75 9.1L7.6 2.4L11 5.7L4.45 12.05Z" fill="#707070"/><path d="M8.4 1.7L9.9 0.3a.7.7 0 0 1 1 0L13.1 2.5a.7.7 0 0 1 0 1L11.7 5Z" fill="#707070"/><path d="M1.2 9.9L3.5 12.1" stroke="#fff" stroke-width="0.9"/></g>
<path d="M1146.2 709.9h7.4l-3.7 5.328Z" fill="#333"/>
<g transform="translate(1245.8,707) scale(1)"><path d="M0.8 0.8L6.8 6.8M6.8 0.8L0.8 6.8" stroke="#111" stroke-width="2.1"/></g>
<g transform="translate(1341,707) scale(1)"><path d="M0.8 0.8L6.8 6.8M6.8 0.8L0.8 6.8" stroke="#111" stroke-width="2.1"/></g>
<g transform="translate(1361.2,706.4) scale(0.56)"><path d="M4 0L8 5.2H5.2V14.6H8L4 19.8L0 14.6H2.8V5.2H0Z" fill="#222"/></g>
<g transform="translate(1401.2,705.8) scale(1.02)"><path d="M-0.1 2.8H11.1M3.6 2.6V1.2a.6.6 0 0 1 .6-.6H6.8a.6.6 0 0 1 .6.6V2.6" fill="none" stroke="#444" stroke-width="1.1"/><path d="M1.4 3V12a1 1 0 0 0 1 1H8.6a1 1 0 0 0 1-1V3" fill="none" stroke="#444" stroke-width="1.1"/><path d="M3.5 5V11M5.5 5V11M7.5 5V11" stroke="#444" stroke-width="0.9"/></g>
<g transform="translate(82,732.2) scale(1)"><path d="M0.6 12L5.9 5L9.3 9L15.6 1" fill="none" stroke="#111" stroke-width="1.6"/></g>
<g transform="translate(106,732.5) scale(1)"><path d="M2.4 6.6L5.2 9.4L10.6 3.2" fill="none" stroke="#fff" stroke-width="1.9"/></g>
<g transform="translate(390.4,736.1) scale(1)"><path d="M0.8 0.8L5.8 5.8M5.8 0.8L0.8 5.8" stroke="#666" stroke-width="1.15"/></g>
<g transform="translate(132,732) scale(1)"><path d="M0 12.4H12" stroke="#9ccc7c" stroke-width="1.1"/><rect x="0.9" y="8.9" width="2" height="2.6" fill="#9ccc7c"/><path d="M4.9 4.7H6.6L7.3 11.5H3.7Z" fill="#1ba0ec"/><path d="M1.2 4.5L9.2 2.1" stroke="#2aa8f0" stroke-width="1.5"/><ellipse cx="9.8" cy="3.5" rx="1.3" ry="2.6" fill="#2aa8f0"/><path d="M1.8 4.7L2.4 7.9" stroke="#6cc4f6" stroke-width="1"/><path d="M10.4 6V11" stroke="#c4e6fb" stroke-width="0.8"/></g>
<g transform="translate(495,732.9) scale(1)"><g transform="scale(0.7499999999999999)"><circle cx="8.8" cy="8.8" r="8.8" fill="#707070"/><path d="M7.4 3H10.2V5.4H7.4ZM6.4 7.2H10.2V12.8H11.4V14.6H6.4V12.8H7.4V9H6.4Z" fill="#fff"/></g></g>
<g transform="translate(514.9,733.2) scale(1)"><path d="M0.2 12.6L0.75 9.1L7.6 2.4L11 5.7L4.45 12.05Z" fill="#707070"/><path d="M8.4 1.7L9.9 0.3a.7.7 0 0 1 1 0L13.1 2.5a.7.7 0 0 1 0 1L11.7 5Z" fill="#707070"/><path d="M1.2 9.9L3.5 12.1" stroke="#fff" stroke-width="0.9"/></g>
<path d="M1146.2 736.9h7.4l-3.7 5.328Z" fill="#333"/>
<g transform="translate(1245.8,734) scale(1)"><path d="M0.8 0.8L6.8 6.8M6.8 0.8L0.8 6.8" stroke="#111" stroke-width="2.1"/></g>
<g transform="translate(1341,734) scale(1)"><path d="M0.8 0.8L6.8 6.8M6.8 0.8L0.8 6.8" stroke="#111" stroke-width="2.1"/></g>
<g transform="translate(1401.2,732.8) scale(1.02)"><path d="M-0.1 2.8H11.1M3.6 2.6V1.2a.6.6 0 0 1 .6-.6H6.8a.6.6 0 0 1 .6.6V2.6" fill="none" stroke="#444" stroke-width="1.1"/><path d="M1.4 3V12a1 1 0 0 0 1 1H8.6a1 1 0 0 0 1-1V3" fill="none" stroke="#444" stroke-width="1.1"/><path d="M3.5 5V11M5.5 5V11M7.5 5V11" stroke="#444" stroke-width="0.9"/></g>
<g transform="translate(82,759.2) scale(1)"><path d="M0.6 12L5.9 5L9.3 9L15.6 1" fill="none" stroke="#111" stroke-width="1.6"/></g>
<g transform="translate(106,759.5) scale(1)"><path d="M2.4 6.6L5.2 9.4L10.6 3.2" fill="none" stroke="#fff" stroke-width="1.9"/></g>
<g transform="translate(233.4,763.1) scale(1)"><path d="M0.8 0.8L5.8 5.8M5.8 0.8L0.8 5.8" stroke="#666" stroke-width="1.15"/></g>
<g transform="translate(133,760.1) scale(1)"><g transform="scale(0.93)"><path d="M0.2 0.8a.6.6 0 0 1 .6-.6H4.6L10.2 5.8a.7.7 0 0 1 0 1L7 10a.7.7 0 0 1-1 0L0.2 4.4Z" fill="#000"/><circle cx="2.3" cy="2.3" r="0.9" fill="#fff"/></g></g>
<g transform="translate(495,759.9) scale(1)"><g transform="scale(0.7499999999999999)"><circle cx="8.8" cy="8.8" r="8.8" fill="#707070"/><path d="M7.4 3H10.2V5.4H7.4ZM6.4 7.2H10.2V12.8H11.4V14.6H6.4V12.8H7.4V9H6.4Z" fill="#fff"/></g></g>
<g transform="translate(514.9,760.2) scale(1)"><path d="M0.2 12.6L0.75 9.1L7.6 2.4L11 5.7L4.45 12.05Z" fill="#707070"/><path d="M8.4 1.7L9.9 0.3a.7.7 0 0 1 1 0L13.1 2.5a.7.7 0 0 1 0 1L11.7 5Z" fill="#707070"/><path d="M1.2 9.9L3.5 12.1" stroke="#fff" stroke-width="0.9"/></g>
<path d="M1146.2 763.9h7.4l-3.7 5.328Z" fill="#333"/>
<g transform="translate(1245.8,761) scale(1)"><path d="M0.8 0.8L6.8 6.8M6.8 0.8L0.8 6.8" stroke="#111" stroke-width="2.1"/></g>
<g transform="translate(1341,761) scale(1)"><path d="M0.8 0.8L6.8 6.8M6.8 0.8L0.8 6.8" stroke="#111" stroke-width="2.1"/></g>
<g transform="translate(1361.2,760.4) scale(0.56)"><path d="M4 0L8 5.2H5.2V14.6H8L4 19.8L0 14.6H2.8V5.2H0Z" fill="#222"/></g>
<g transform="translate(1401.2,759.8) scale(1.02)"><path d="M-0.1 2.8H11.1M3.6 2.6V1.2a.6.6 0 0 1 .6-.6H6.8a.6.6 0 0 1 .6.6V2.6" fill="none" stroke="#444" stroke-width="1.1"/><path d="M1.4 3V12a1 1 0 0 0 1 1H8.6a1 1 0 0 0 1-1V3" fill="none" stroke="#444" stroke-width="1.1"/><path d="M3.5 5V11M5.5 5V11M7.5 5V11" stroke="#444" stroke-width="0.9"/></g>
<path d="M541 793H549.6M545.3 788.7V797.3" stroke="#555" stroke-width="2.3"/>
<g transform="translate(1435.3,626.2) scale(0.74)"><path d="M1 0V16M24.1 0V16M3.4 8H21.7M8.6 2.9L3.4 8L8.6 13.1M16.5 2.9L21.7 8L16.5 13.1" fill="none" stroke="#444" stroke-width="1.9"/></g>
<g transform="translate(1439.2,651.8) scale(1)"><path d="M0.3 0.6L4.6 4.9L8.9 0.6" fill="none" stroke="#222" stroke-width="2.3"/></g>
<g transform="translate(1443,668.2) scale(1)"><path d="M2.4 6.6L5.2 9.4L10.6 3.2" fill="none" stroke="#fff" stroke-width="1.9"/></g>
<g transform="translate(1824,668.6) scale(0.98)"><path d="M0.2 12.6L0.75 9.1L7.6 2.4L11 5.7L4.45 12.05Z" fill="#686868"/><path d="M8.4 1.7L9.9 0.3a.7.7 0 0 1 1 0L13.1 2.5a.7.7 0 0 1 0 1L11.7 5Z" fill="#686868"/><path d="M1.2 9.9L3.5 12.1" stroke="#fff" stroke-width="0.9"/></g>
<g transform="translate(1853.8,667.6) scale(1.06)"><path d="M-0.1 2.8H11.1M3.6 2.6V1.2a.6.6 0 0 1 .6-.6H6.8a.6.6 0 0 1 .6.6V2.6" fill="none" stroke="#7a7a7a" stroke-width="1.1"/><path d="M1.4 3V12a1 1 0 0 0 1 1H8.6a1 1 0 0 0 1-1V3" fill="none" stroke="#7a7a7a" stroke-width="1.1"/><path d="M3.5 5V11M5.5 5V11M7.5 5V11" stroke="#7a7a7a" stroke-width="0.9"/></g>
<g transform="translate(1439.2,692.8) scale(1)"><path d="M0.3 0.6L4.6 4.9L8.9 0.6" fill="none" stroke="#222" stroke-width="2.3"/></g>
<g transform="translate(1443,709.2) scale(1)"><path d="M2.4 6.6L5.2 9.4L10.6 3.2" fill="none" stroke="#fff" stroke-width="1.9"/></g>
<g transform="translate(1824,709.6) scale(0.98)"><path d="M0.2 12.6L0.75 9.1L7.6 2.4L11 5.7L4.45 12.05Z" fill="#686868"/><path d="M8.4 1.7L9.9 0.3a.7.7 0 0 1 1 0L13.1 2.5a.7.7 0 0 1 0 1L11.7 5Z" fill="#686868"/><path d="M1.2 9.9L3.5 12.1" stroke="#fff" stroke-width="0.9"/></g>
<g transform="translate(1853.8,708.6) scale(1.06)"><path d="M-0.1 2.8H11.1M3.6 2.6V1.2a.6.6 0 0 1 .6-.6H6.8a.6.6 0 0 1 .6.6V2.6" fill="none" stroke="#7a7a7a" stroke-width="1.1"/><path d="M1.4 3V12a1 1 0 0 0 1 1H8.6a1 1 0 0 0 1-1V3" fill="none" stroke="#7a7a7a" stroke-width="1.1"/><path d="M3.5 5V11M5.5 5V11M7.5 5V11" stroke="#7a7a7a" stroke-width="0.9"/></g>
<g transform="translate(1439.2,733.8) scale(1)"><path d="M0.3 0.6L4.6 4.9L8.9 0.6" fill="none" stroke="#222" stroke-width="2.3"/></g>
<g transform="translate(1443,750.2) scale(1)"><path d="M2.4 6.6L5.2 9.4L10.6 3.2" fill="none" stroke="#fff" stroke-width="1.9"/></g>
<g transform="translate(1824,750.6) scale(0.98)"><path d="M0.2 12.6L0.75 9.1L7.6 2.4L11 5.7L4.45 12.05Z" fill="#686868"/><path d="M8.4 1.7L9.9 0.3a.7.7 0 0 1 1 0L13.1 2.5a.7.7 0 0 1 0 1L11.7 5Z" fill="#686868"/><path d="M1.2 9.9L3.5 12.1" stroke="#fff" stroke-width="0.9"/></g>
<g transform="translate(1853.8,749.6) scale(1.06)"><path d="M-0.1 2.8H11.1M3.6 2.6V1.2a.6.6 0 0 1 .6-.6H6.8a.6.6 0 0 1 .6.6V2.6" fill="none" stroke="#7a7a7a" stroke-width="1.1"/><path d="M1.4 3V12a1 1 0 0 0 1 1H8.6a1 1 0 0 0 1-1V3" fill="none" stroke="#7a7a7a" stroke-width="1.1"/><path d="M3.5 5V11M5.5 5V11M7.5 5V11" stroke="#7a7a7a" stroke-width="0.9"/></g>
<g transform="translate(1439.2,774.8) scale(1)"><path d="M0.3 0.6L4.6 4.9L8.9 0.6" fill="none" stroke="#222" stroke-width="2.3"/></g>
<g transform="translate(1443,791.2) scale(1)"><path d="M2.4 6.6L5.2 9.4L10.6 3.2" fill="none" stroke="#fff" stroke-width="1.9"/></g>
<g transform="translate(1824,791.6) scale(0.98)"><path d="M0.2 12.6L0.75 9.1L7.6 2.4L11 5.7L4.45 12.05Z" fill="#686868"/><path d="M8.4 1.7L9.9 0.3a.7.7 0 0 1 1 0L13.1 2.5a.7.7 0 0 1 0 1L11.7 5Z" fill="#686868"/><path d="M1.2 9.9L3.5 12.1" stroke="#fff" stroke-width="0.9"/></g>
<g transform="translate(1853.8,790.6) scale(1.06)"><path d="M-0.1 2.8H11.1M3.6 2.6V1.2a.6.6 0 0 1 .6-.6H6.8a.6.6 0 0 1 .6.6V2.6" fill="none" stroke="#7a7a7a" stroke-width="1.1"/><path d="M1.4 3V12a1 1 0 0 0 1 1H8.6a1 1 0 0 0 1-1V3" fill="none" stroke="#7a7a7a" stroke-width="1.1"/><path d="M3.5 5V11M5.5 5V11M7.5 5V11" stroke="#7a7a7a" stroke-width="0.9"/></g></svg>
<div class="" style="left:1089.8px;top:78.8px;width:100px;height:77px;background:#fff;border:1px solid #c9c9c9;box-sizing:border-box;"></div>
<div class="" style="left:1090.8px;top:105px;width:98px;height:25px;background:#4bbbe8;"></div>
<div class="t" style="left:1112.2px;top:84.5px;color:#444;letter-spacing:-0.632px;">Time Series</div>
<div class="t" style="left:1112.2px;top:109.8px;color:#fff;-webkit-text-stroke:.3px #fff;letter-spacing:-0.193px;">Duration</div>
<div class="t" style="left:1112.2px;top:135px;color:#444;letter-spacing:-0.800px;">X Y</div>
<div class="" style="left:28.3px;top:528px;width:1850px;height:29.6px;border:3.5px solid #7ed136;box-sizing:border-box;"></div>
<div class="t top" style="left:141px;top:474.6px;font-size:15.5px;font-weight:bold;color:#1e1e1e;letter-spacing:-0.29px;">X-Axis starts at zero</div>
<div class="t top" style="left:1212.8px;top:589.6px;font-size:15.5px;font-weight:bold;color:#1e1e1e;letter-spacing:-0.07px;">Time Windows Table</div>
<svg class="ov" style="z-index:4" width="1887" height="819" viewBox="0 0 1887 819"><path d="M1097.5 95.5L1099 90.5L1101.5 94.5L1103.5 89.5L1105 93M1106.3 89.5L1107 91.5" fill="none" stroke="#444" stroke-width="0.9"/>
<g transform="translate(1096.5,114.5) scale(0.46)"><path d="M0.8 0V13.6M24.2 0V13.6M0.8 6.8H24.2" fill="none" stroke="#6a6a6a" stroke-width="1.9"/></g>
<rect x="1098.0" y="138.5" width="1.1" height="1.1" fill="#444"/>
<rect x="1102.0" y="137.5" width="1.1" height="1.1" fill="#444"/>
<rect x="1100.0" y="141.5" width="1.1" height="1.1" fill="#444"/>
<rect x="1105.0" y="141.0" width="1.1" height="1.1" fill="#444"/>
<rect x="1098.0" y="145.0" width="1.1" height="1.1" fill="#444"/>
<rect x="1101.5" y="145.5" width="1.1" height="1.1" fill="#444"/>
<rect x="1098.5" y="148.0" width="1.1" height="1.1" fill="#444"/>
<path d="M135.6 466H292.5A3.6 3.6 0 0 1 296.1 469.6V493.4A3.6 3.6 0 0 1 292.5 497H203.5L41.5 530.6L158.5 497H135.6A3.6 3.6 0 0 1 132 493.4V469.6A3.6 3.6 0 0 1 135.6 466Z" fill="#fff" stroke="#7ed136" stroke-width="3.5" stroke-linejoin="round"/>
<path d="M1204.5 579.8H1375.3000000000002A3.6 3.6 0 0 1 1378.9 583.4V610.6A3.6 3.6 0 0 1 1375.3000000000002 614.2H1351.5L1430.5 644.5L1302.5 614.2H1204.5A3.6 3.6 0 0 1 1200.9 610.6V583.4A3.6 3.6 0 0 1 1204.5 579.8Z" fill="#fff" stroke="#7ed136" stroke-width="3.5" stroke-linejoin="round"/></svg>
</body></html>
